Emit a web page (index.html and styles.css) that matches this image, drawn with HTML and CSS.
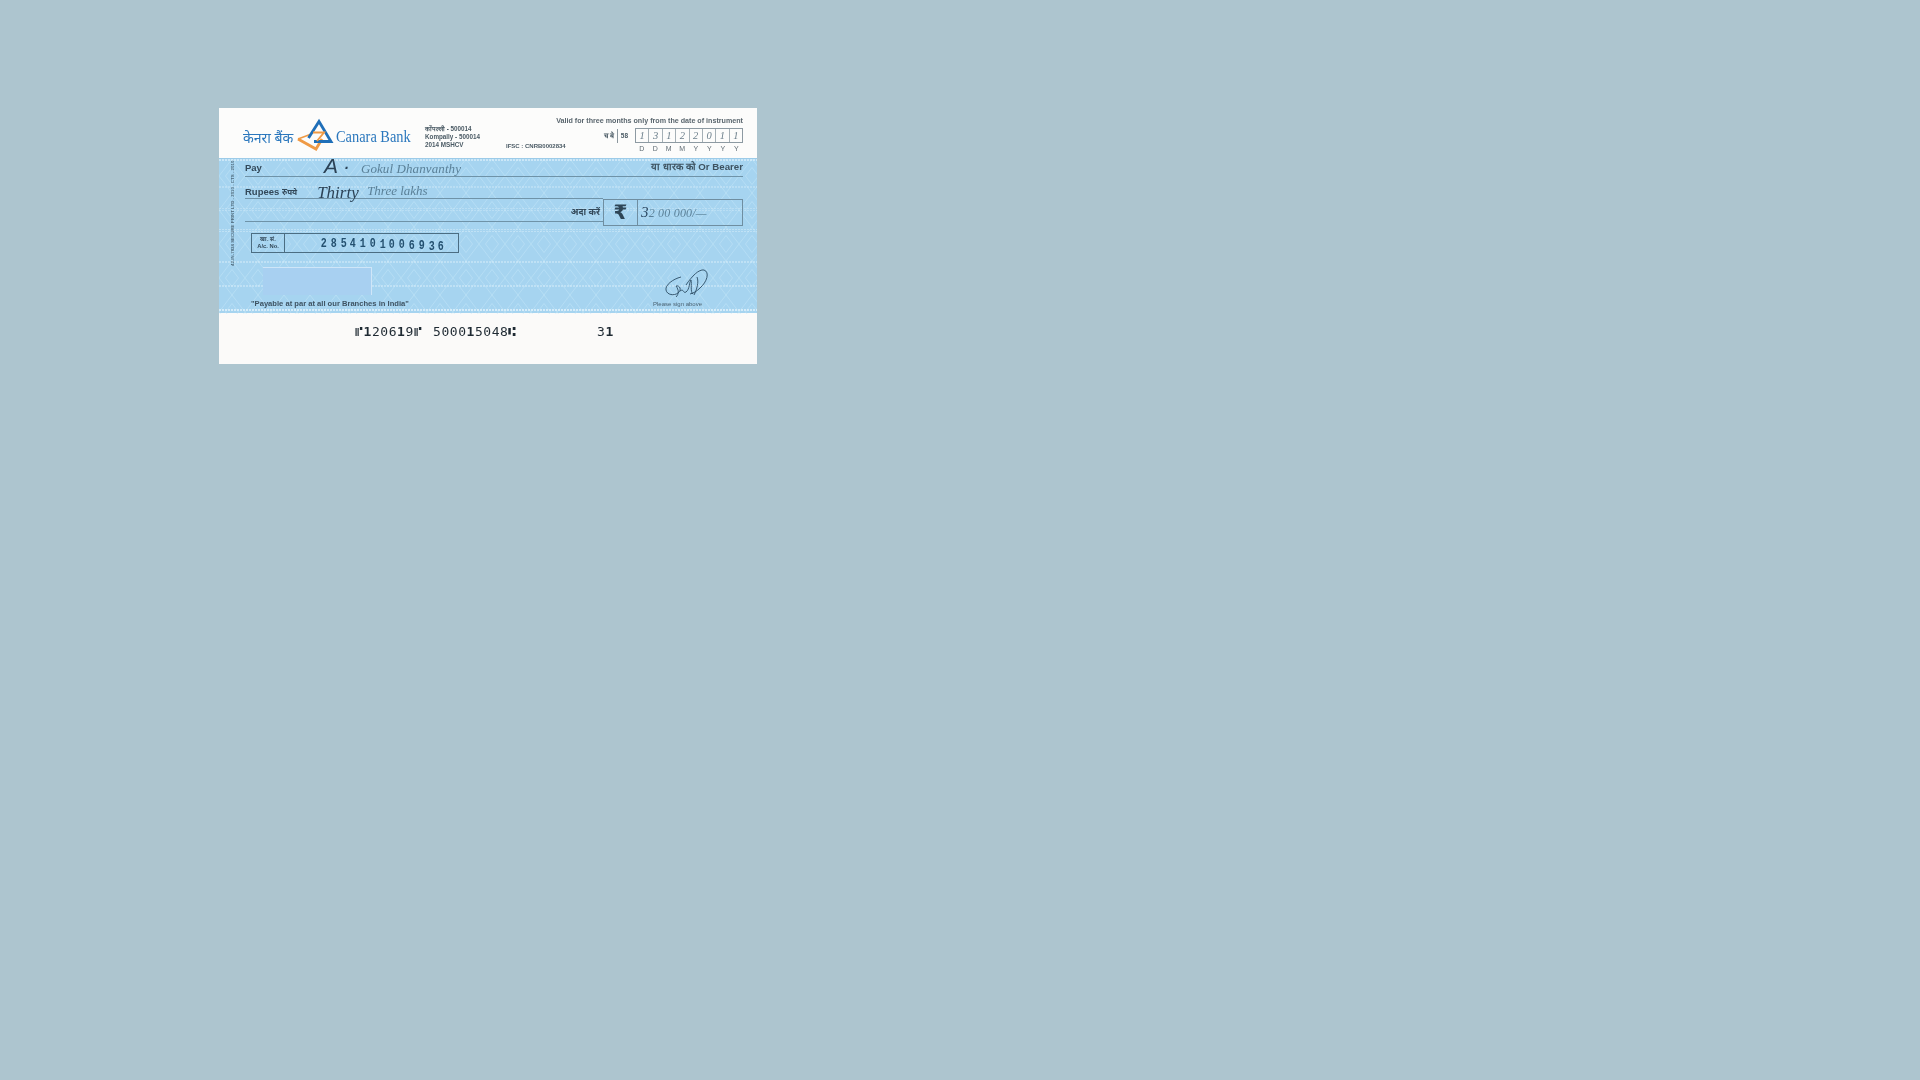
FILE: index.html
```html
<!DOCTYPE html>
<html lang="en">
<head>
<meta charset="utf-8">
<title>Canara Bank cheque</title>
<link rel="stylesheet" href="styles.css">
</head>
<body>
<main class="cheque">
  <header class="top">
    <div class="brand">
      <span class="brand-hi">केनरा बैंक</span>
      <svg class="logo" viewBox="0 0 38 34" width="38" height="34" aria-hidden="true">
        <path d="M2 21 L20 31 L26 21" fill="none" stroke="#ef9a45" stroke-width="2.8"/>
        <path d="M2 21 L14 16.5" fill="none" stroke="#ef9a45" stroke-width="1.6"/>
        <path d="M12.5 20 L23 3.5 L35 23.5 L18 23.5" fill="none" stroke="#1f6fb8" stroke-width="2.8"/>
        <path d="M17 14.5 H28 L21 23" fill="none" stroke="#ef9a45" stroke-width="1.9"/>
      </svg>
      <span class="brand-en">Canara Bank</span>
    </div>
    <div class="branch">
      <span>कोंपल्ली - 500014</span>
      <span>Kompally - 500014</span>
      <span>2014 MSHCV</span>
    </div>
    <div class="ifsc">IFSC : CNRB0002834</div>
    <div class="validity">
      <div class="valid-note">Valid for three months only from the date of instrument</div>
      <div class="date-row">
        <span class="acct-type">च बे</span>
        <span class="acct-code">58</span>
        <div class="date-boxes">
          <span class="hand">1</span><span class="hand">3</span><span class="hand">1</span><span class="hand">2</span><span class="hand">2</span><span class="hand">0</span><span class="hand">1</span><span class="hand">1</span>
        </div>
      </div>
      <div class="date-labels">
        <span>D</span><span>D</span><span>M</span><span>M</span><span>Y</span><span>Y</span><span>Y</span><span>Y</span>
      </div>
    </div>
  </header>

  <section class="face">
    <svg class="guilloche" width="538" height="155" aria-hidden="true">
      <defs>
        <pattern id="tri" width="26" height="34" patternUnits="userSpaceOnUse">
          <path d="M0 17 L13 0 L26 17 L13 34 Z M6.5 17 L13 8.5 L19.5 17 L13 25.5 Z" fill="none" stroke="#c3e5f8" stroke-width="1" opacity=".5"/>
        </pattern>
        <pattern id="dots" width="3" height="3" patternUnits="userSpaceOnUse">
          <rect width="2" height="2" fill="#e4f4fd"/>
        </pattern>
      </defs>
      <rect width="538" height="155" fill="url(#tri)"/>
      <rect y="0" width="538" height="3" fill="url(#dots)" opacity=".6"/>
      <rect y="26" width="538" height="3" fill="url(#dots)" opacity=".3"/>
      <rect y="49" width="538" height="3" fill="url(#dots)" opacity=".3"/>
      <rect y="70" width="538" height="3" fill="url(#dots)" opacity=".4"/>
      <rect y="102" width="538" height="3" fill="url(#dots)" opacity=".4"/>
      <rect y="125" width="538" height="3" fill="url(#dots)" opacity=".4"/>
      <rect y="150" width="538" height="3" fill="url(#dots)" opacity=".75"/>
    </svg>
    <div class="strip">42-IN-7834 SECURE PRINT LTD - 2010 - CTS - 2010</div>
    <div class="fields">
      <div class="pay-row">
        <span class="label label-pay">Pay</span>
        <span class="hand payee-init">A ·</span>
        <span class="hand payee-name">Gokul Dhanvanthy</span>
        <span class="bearer">या धारक को Or Bearer</span>
      </div>
      <div class="amount-block">
        <div class="words">
          <div class="rupees-row">
            <span class="label">Rupees <span class="label-hi">रुपये</span></span>
            <span class="hand word-strong">Thirty</span>
            <span class="hand word-light">Three lakhs</span>
          </div>
          <div class="pay-line"><span class="label-hi ada">अदा करें</span></div>
        </div>
        <div class="amount-box">
          <span class="rupee">₹</span>
          <span class="hand figure"><b>3</b>2 00 000/—</span>
        </div>
      </div>
      <div class="account">
        <div class="acct-label"><span>खा. सं.</span><span>A/c. No.</span></div>
        <div class="acct-no">
          <span>2</span><span>8</span><span>5</span><span>4</span><span>1</span><span>0</span><span class="d1">1</span><span class="d1">0</span><span class="d1">0</span><span class="d2">6</span><span class="d2">9</span><span class="d3">3</span><span class="d3">6</span>
        </div>
      </div>
      <div class="lower">
        <div class="lower-left">
          <div class="stamp"></div>
          <div class="par">"Payable at par at all our Branches in India"</div>
        </div>
        <div class="sign">
          <svg class="signature" viewBox="0 0 46 32" width="46" height="32" aria-hidden="true">
            <path d="M17 9 C9 11 1 17 2 22 C3 27 10 28 14 25 C18 22 16 17 12 18 C15 22 15 26 12 29 M16 23 C20 20 19 26 22 24 C26 21 25 14 27 12 C28 16 26 24 29 26 M22 17 C28 8 35 1 40 2 C46 4 43 14 36 20 C33 23 30 25 26 26 M33 9 C35 14 33 21 30 27" fill="none" stroke="#2b4c63" stroke-width=".9"/>
          </svg>
          <span class="sign-note">Please sign above</span>
        </div>
      </div>
    </div>
  </section>

  <footer class="micr">
    <span class="micr-a">⑈<b>1</b>206<b>1</b>9⑈</span>
    <span class="micr-b">5000<b>1</b>5048⑆</span>
    <span class="micr-c">3<b>1</b></span>
  </footer>
</main>
</body>
</html>
```
FILE: styles.css
```css
* { box-sizing: border-box; }
html, body { margin: 0; height: 100%; }
body {
  background: #adc5cf;
  font-family: "Liberation Sans", Arial, sans-serif;
  overflow: hidden;
}
.cheque {
  width: 538px;
  height: 256px;
  margin: 108px 0 0 219px;
  display: flex;
  flex-direction: column;
  background: #fbfbfa;
  color: #3b4a55;
  filter: blur(0.7px);
}
.top {
  height: 50px;
  flex: none;
  display: flex;
  background: #fcfcfb;
  position: relative;
}
.brand {
  display: flex;
  align-items: center;
  width: 206px;
  padding: 8px 0 0 24px;
  flex: none;
}
.brand-hi {
  font-family: "Noto Sans", "Liberation Sans", sans-serif;
  font-size: 14px;
  color: #2a77bd;
  white-space: nowrap;
  width: 53px;
  flex: none;
}
.logo { flex: none; margin: -4px 0 0 0; }
.brand-en {
  font-family: "Liberation Serif", serif;
  font-size: 16px;
  color: #2a77bd;
  margin-left: 2px;
  white-space: nowrap;
  transform: scaleX(.9);
  transform-origin: left center;
}
.branch {
  display: flex;
  flex-direction: column;
  width: 81px;
  padding-top: 17px;
  font-size: 6.3px;
  line-height: 8.2px;
  font-weight: 700;
  color: #4a5a64;
  white-space: nowrap;
  flex: none;
}
.ifsc {
  width: 52px;
  padding-top: 35px;
  font-size: 6px;
  font-weight: 700;
  color: #4a5a64;
  white-space: nowrap;
  flex: none;
}
.validity {
  flex: 1;
  min-width: 0;
  padding: 9px 14px 0 0;
  display: flex;
  flex-direction: column;
  align-items: flex-end;
}
.valid-note {
  font-size: 7.15px;
  font-weight: 700;
  color: #5a666e;
  white-space: nowrap;
  line-height: 9px;
}
.date-row {
  display: flex;
  align-items: center;
  margin-top: 2px;
  height: 15px;
}
.acct-type { font-size: 7px; font-weight: 700; color: #4a5a64; padding-right: 3px; border-right: 1px solid #8c979e; line-height: 14px; }
.acct-code { font-size: 6.5px; font-weight: 700; color: #4a5a64; padding: 0 7px 0 3px; }
.date-boxes { display: flex; width: 108px; height: 15px; border: 1px solid #8d9aa2; }
.date-boxes span {
  flex: 1;
  border-right: 1px solid #a5b0b6;
  text-align: center;
  font-size: 10.5px;
  line-height: 13px;
  color: #6e818d;
}
.date-boxes span:last-child { border-right: 0; }
.date-labels { display: flex; width: 108px; margin-top: 2px; }
.date-labels span { flex: 1; text-align: center; font-size: 7px; line-height: 8px; color: #5f6b73; }

.hand { font-family: "Liberation Serif", serif; font-style: italic; white-space: nowrap; }

.face {
  position: relative;
  height: 155px;
  flex: none;
  display: flex;
  background: #a6d4f0;
  border-top: 1px solid #9ccbe8;
}
.guilloche { position: absolute; left: 0; top: 0; }
.strip {
  position: relative;
  width: 26px;
  flex: none;
  writing-mode: vertical-rl;
  transform: rotate(180deg) translateX(-1px);
  font-size: 4.4px;
  line-height: 26px;
  font-weight: 700;
  color: #4e6a7c;
  white-space: nowrap;
  height: 101px;
  margin-top: 6px;
  text-align: left;
}
.fields {
  position: relative;
  flex: 1;
  display: flex;
  flex-direction: column;
  padding-right: 14px;
}
.label { font-size: 9.5px; font-weight: 700; color: #33495a; white-space: nowrap; }
.label-pay { position: relative; top: -2px; }
.label-hi { font-size: 8px; font-weight: 700; color: #33495a; font-family: "Noto Sans", "Liberation Sans", sans-serif; }
.pay-row {
  height: 18px;
  display: flex;
  align-items: flex-end;
  border-bottom: 1px solid #6f93a8;
  position: relative;
  padding-bottom: 1px;
}
.payee-init { font-size: 21px; line-height: 18px; color: #2b4256; margin-left: 62px; width: 37px; font-family: "Liberation Sans", sans-serif; font-weight: 400; }
.payee-name { font-size: 13px; line-height: 15px; color: #5a8098; flex: 1; letter-spacing: .1px; position: relative; top: 1px; }
.bearer { font-size: 9.7px; font-weight: 700; color: #3d5260; white-space: nowrap; position: relative; top: -2px; }
.amount-block { display: flex; height: 49px; }
.words { width: 358px; flex: none; display: flex; flex-direction: column; }
.rupees-row {
  height: 22px;
  display: flex;
  align-items: flex-end;
  border-bottom: 1px solid #6f93a8;
  padding-bottom: 1px;
}
.word-strong { font-size: 17px; line-height: 20px; color: #2b4256; margin-left: 20px; width: 50px; position: relative; top: 6px; }
.word-light { font-size: 13px; line-height: 20px; color: #5a8098; position: relative; top: 4px; }
.pay-line {
  height: 23px;
  border-bottom: 1px solid #6f93a8;
  display: flex;
  justify-content: flex-end;
  align-items: flex-end;
  padding: 0 3px 3px 0;
}
.ada { font-size: 9px; }
.amount-box {
  flex: 1;
  margin-top: 22px;
  height: 27px;
  border: 1px solid #6f8ea1;
  display: flex;
  align-items: center;
}
.rupee {
  width: 34px;
  height: 100%;
  border-right: 1px solid #6f8ea1;
  text-align: center;
  font-family: "DejaVu Sans", sans-serif;
  font-size: 20px;
  font-weight: 700;
  line-height: 25px;
  color: #2e4657;
  flex: none;
}
.figure { font-size: 12px; color: #5a8098; padding-left: 3px; letter-spacing: .2px; }
.figure b { font-weight: 400; font-size: 15px; color: #2b4760; }
.account {
  display: flex;
  width: 208px;
  height: 20px;
  margin: 7px 0 0 6px;
  border: 1px solid #4b6d82;
  flex: none;
}
.acct-label {
  width: 33px;
  flex: none;
  border-right: 1px solid #4b6d82;
  display: flex;
  flex-direction: column;
  align-items: center;
  justify-content: center;
  font-size: 5.8px;
  line-height: 7px;
  font-weight: 700;
  color: #33495a;
}
.acct-no {
  display: flex;
  flex: 1;
  padding: 4px 0 0 35px;
  gap: 3.1px;
  font-family: "Liberation Mono", monospace;
  font-size: 12.5px;
  line-height: 12px;
  font-weight: 700;
  color: #24506f;
}
.acct-no span { width: 6.7px; transform: scaleX(.8); }
.acct-no .d1 { padding-top: 1px; }
.acct-no .d2 { padding-top: 2px; }
.acct-no .d3 { padding-top: 3px; }
.lower { flex: 1; display: flex; justify-content: space-between; padding: 14px 39px 0 6px; min-height: 0; }
.lower-left { display: flex; flex-direction: column; }
.stamp {
  width: 109px;
  height: 28px;
  margin-left: 12px;
  background: #a8d0f1;
  border-top: 1px solid #cfe6f8;
  border-right: 1px solid #cfe6f8;
}
.par { font-size: 7.6px; font-weight: 700; color: #3e5363; margin-top: 4px; white-space: nowrap; line-height: 9px; }
.sign { display: flex; flex-direction: column; align-items: flex-end; margin-top: 1px; }
.signature { margin-right: -6px; }
.sign-note { font-size: 6px; color: #4a6272; white-space: nowrap; margin: 1px 2px 0 0; line-height: 7px; }
.micr {
  flex: 1;
  display: flex;
  padding: 12px 0 0 136px;
  align-items: flex-start;
  font-family: "DejaVu Sans Mono", monospace;
  font-size: 13px;
  letter-spacing: .55px;
  line-height: 14px;
  color: #1f2a33;
  background: #fbfaf9;
}
.micr-a { width: 78px; white-space: nowrap; }
.micr-b { width: 164px; white-space: nowrap; }
.micr-c { white-space: nowrap; }
```
